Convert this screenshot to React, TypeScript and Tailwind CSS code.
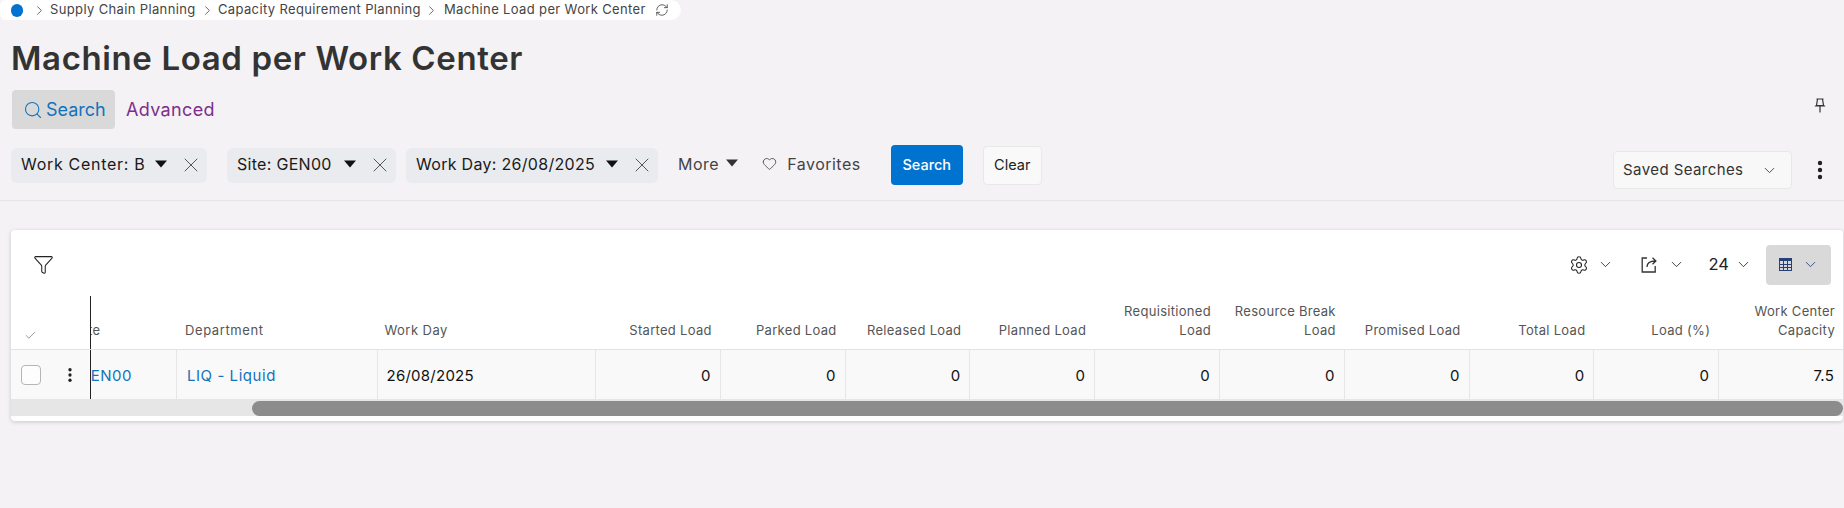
import { Search, ChevronRight, RefreshCw, X, Heart, Settings, Funnel, Check, ChevronDown } from "lucide-react";

const Caret = ({ color = "#111" }: { color?: string }) => (
  <svg width="14" height="8" viewBox="0 0 14 8"><path d="M1 0.5h12L7 7.5z" fill={color} /></svg>
);

const Kebab = ({ className = "" }: { className?: string }) => (
  <svg width="6" height="20" viewBox="0 0 6 20" className={className}>
    <circle cx="3" cy="3" r="2.2" fill="#222" /><circle cx="3" cy="10" r="2.2" fill="#222" /><circle cx="3" cy="17" r="2.2" fill="#222" />
  </svg>
);

const Chip = ({ label, className, labelClass }: { label: string; className: string; labelClass: string }) => (
  <div className={`h-[35px] rounded-md bg-[#e9ebee] flex items-center pl-[10px] text-[16px] text-[#1a1a1a] ${className}`}>
    <span className={`pb-[2px] whitespace-nowrap ${labelClass}`}>{label}</span>
    <span className="ml-auto flex items-center gap-[11px] pr-[4px]">
      <span className="-mt-[3px]"><Caret /></span>
      <X size={24} strokeWidth={1} color="#555" />
    </span>
  </div>
);

const heads: string[][] = [
  ["Started Load"], ["Parked Load"], ["Released Load"], ["Planned Load"], ["Requisitioned", "Load"],
  ["Resource Break", "Load"], ["Promised Load"], ["Total Load"], ["Load (%)"], ["Work Center", "Capacity"],
];
const vals = ["0", "0", "0", "0", "0", "0", "0", "0", "0", "7.5"];
const cols = "grid-cols-[79px_86px_200.5px_218.5px_repeat(10,1fr)]";

export default function App() {
  return (
    <div className="h-[508px] w-[1844px] overflow-hidden bg-[#f4f2f5] font-['Inter','Liberation_Sans',sans-serif] text-[#333]">
      <div className="h-5 w-[681px] rounded-r-[10px] rounded-l-md bg-white flex items-center text-[13px] tracking-[0.36px] whitespace-nowrap text-[#444]">
        <span className="ml-[11px] h-[13px] w-[12px] rounded-full bg-[#0073d1]" />
        <ChevronRight size={15} strokeWidth={1.3} className="ml-[9px]" color="#444" />
        <span className="ml-[3px] w-[147px]">Supply Chain Planning</span>
        <ChevronRight size={15} strokeWidth={1.3} className="ml-[3px]" color="#444" />
        <span className="ml-[3px] w-[205px]">Capacity Requirement Planning</span>
        <ChevronRight size={15} strokeWidth={1.3} className="ml-[1px]" color="#444" />
        <span className="ml-[5px] w-[197px]">Machine Load per Work Center</span>
        <RefreshCw size={14} strokeWidth={1.3} className="ml-[14px]" color="#333" />
      </div>

      <h1 className="ml-[11px] mt-[19px] h-[38px] text-[33px] leading-[38px] font-semibold tracking-[0.62px] text-[#333]">Machine Load per Work Center</h1>

      <div className="mt-[13px] ml-[12px] mr-[18px] flex items-center h-[39px]">
        <div className="h-[39px] w-[103px] rounded-[4px] bg-[#d9d9d9] flex items-center pl-[11px] gap-[3px] text-[18px] text-[#1273bd]">
          <Search size={20} strokeWidth={1.3} />
          <span>Search</span>
        </div>
        <span className="ml-[11px] text-[18px] tracking-[0.35px] text-[#7d2e8c]">Advanced</span>
        <svg className="ml-auto -mt-[9px]" width="12" height="15" viewBox="0 0 12 15" fill="none" stroke="#333" strokeWidth="1.2">
          <path d="M2.5 1h7M3.5 1l-1 6.5h7L8.5 1M.8 8h10.4M6 8v6.5" />
        </svg>
      </div>

      <div className="mt-[16px] ml-[11px] h-[40px] flex items-center">
        <Chip label="Work Center: B" className="w-[196px]" labelClass="tracking-[0.7px]" />
        <Chip label="Site: GEN00" className="ml-[20px] w-[169px]" labelClass="tracking-[0.3px]" />
        <Chip label="Work Day: 26/08/2025" className="ml-[10px] w-[252px]" labelClass="tracking-[0.3px]" />
        <span className="ml-[20px] -mt-[2px] text-[16px] tracking-[0.5px] text-[#444]">More</span>
        <span className="ml-[6px] -mt-[4px]"><Caret color="#333" /></span>
        <Heart size={15} strokeWidth={1.2} className="ml-[23px] -mt-[4px]" color="#333" />
        <span className="ml-[10px] -mt-[2px] text-[16px] tracking-[0.5px] text-[#444]">Favorites</span>
        <button className="ml-[30px] h-10 w-[72px] rounded-[4px] bg-[#0073d1] text-[14.5px] font-medium text-white">Search</button>
        <button className="ml-5 h-[39px] w-[59px] rounded-[4px] border border-[#e8e8ea] bg-[#f9f9f9] text-[14.5px] text-[#222]">Clear</button>
        <div className="ml-auto flex items-center">
          <div className="mt-[10px] flex h-[38px] w-[179px] items-center rounded-[4px] border border-[#e8e8ea] bg-[#f8f8f8] pl-[9px] pr-[13px] text-[15px] tracking-[0.42px] text-[#333]">
            <span>Saved Searches</span>
            <ChevronDown size={17} strokeWidth={1.2} className="ml-auto" />
          </div>
          <Kebab className="ml-[25px] mr-[21px] mt-[10px]" />
        </div>
      </div>

      <div className="mt-[15px] h-px bg-[#e5e5e8]" />

      <div className="mt-[29px] ml-[11px] mr-px h-[191px] rounded-[4px] bg-white shadow-[0_1px_4px_rgba(0,0,0,0.18)] overflow-hidden">
        <div className="h-[66px] flex items-center pl-[22px] pr-3 pt-[3px]">
          <Funnel size={21} strokeWidth={1.2} color="#222" />
          <div className="ml-auto flex items-center">
            <Settings size={20} strokeWidth={1.3} color="#222" />
            <ChevronDown size={17} strokeWidth={1.2} className="ml-[8px]" color="#222" />
            <svg className="ml-[27px]" width="17" height="17" viewBox="0 0 17 17" fill="none" stroke="#333" strokeWidth="1.3">
              <path d="M6 2H1.2v14h13V10M6 11c0-3.5 2.5-6 8.5-6M11.5 1.8l3.4 3.2-3.4 3.2" />
            </svg>
            <ChevronDown size={17} strokeWidth={1.2} className="ml-[10px]" color="#222" />
            <span className="ml-[24px] text-[16.5px] text-[#222]">24</span>
            <ChevronDown size={17} strokeWidth={1.2} className="ml-[6px]" color="#222" />
            <div className="ml-[14px] h-10 w-[65px] rounded-[4px] bg-[#d9d9d9] flex items-center pl-[13px]">
              <svg width="13" height="13" viewBox="0 0 13 13" fill="none" stroke="#27407a" strokeWidth="1">
                <rect x="0.5" y="0.5" width="12" height="12" /><rect x="0" y="0" width="13" height="3" fill="#27407a" stroke="none" />
                <path d="M0 6.5h13M0 9.5h13M4.5 3v10M8.5 3v10" />
              </svg>
              <ChevronDown size={17} strokeWidth={1.2} className="ml-[10px]" color="#27407a" />
            </div>
          </div>
        </div>

        <div className={`grid ${cols} h-[54px] items-end border-b border-[#e3e3e3] text-[13px] leading-[19px] tracking-[0.3px] text-[#555]`}>
          <div className="pl-[13px] pb-[7px]"><Check size={13} strokeWidth={1} color="#444" /></div>
          <div className="h-full flex items-end border-l border-[#222] overflow-hidden pb-[9px]"><span className="-ml-[15px]">Site</span></div>
          <div className="pl-[9px] pb-[9px] tracking-[0.6px]">Department</div>
          <div className="pl-[8px] pb-[9px] tracking-[0.45px]">Work Day</div>
          {heads.map((h) => (
            <div key={h[0]} className="text-right pr-[8px] pb-[9px]">
              {h.map((l) => <div key={l}>{l}</div>)}
            </div>
          ))}
        </div>

        <div className={`grid ${cols} h-[49px] bg-[#f9f9f9] text-[15px] tracking-[0.25px] text-[#111]`}>
          <div className="flex items-center pl-[10px]">
            <span className="h-5 w-5 rounded-[4px] border border-[#b5b5b5] bg-white/60" />
            <Kebab className="ml-[26px] scale-75" />
          </div>
          <div className="flex items-center border-l border-[#222] overflow-hidden text-[#1273bd] tracking-[0.5px] pt-[4px]"><span className="-ml-[12px]">GEN00</span></div>
          <div className="flex items-center border-l border-[#e6e6e6] pl-[10px] pt-[4px] text-[#1273bd] tracking-[0.55px]">LIQ - Liquid</div>
          <div className="flex items-center border-l border-[#e6e6e6] pl-[9px] pt-[4px] text-[#111]">26/08/2025</div>
          {vals.map((v, i) => (
            <div key={i} className="flex items-center justify-end border-l border-[#e6e6e6] pr-[9px] pt-[4px]">{v}</div>
          ))}
        </div>

        <div className="h-[17px] bg-[#e6e6e6] pt-[2px] pl-[241px]">
          <div className="h-[15px] rounded-full bg-[#8c8c8c]" />
        </div>
      </div>
    </div>
  );
}
